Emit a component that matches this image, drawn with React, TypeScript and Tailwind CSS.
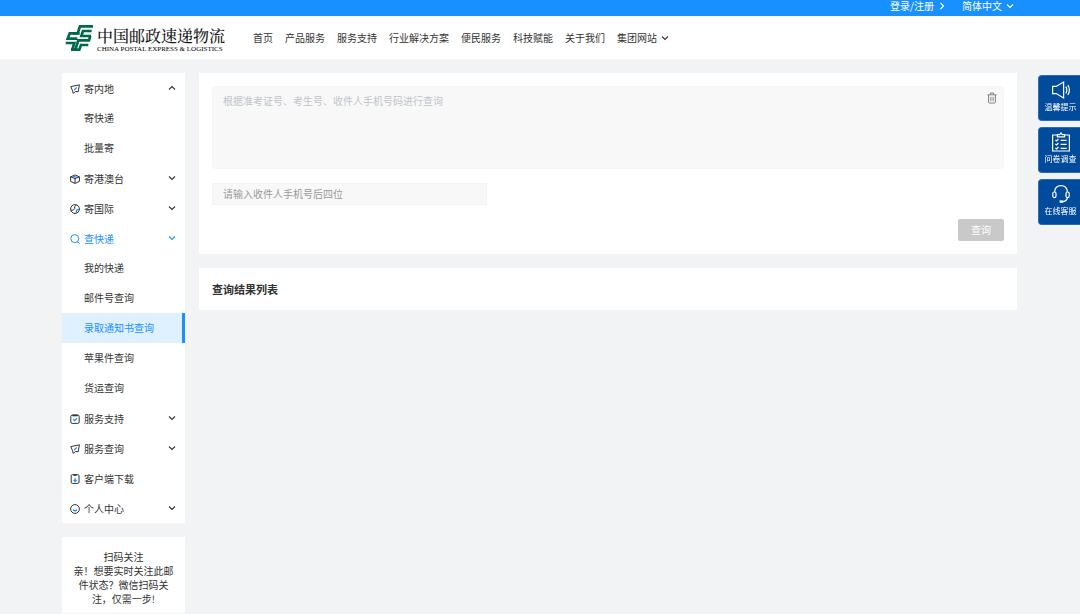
import { useState, type ReactNode } from "react";
import clsx from "clsx";

type Group = {
  label: string;
  icon: ReactNode;
  children?: string[];
  leaf?: boolean;
};

const plane = (
  <>
    <path d="M.8 2.6 9.4 .8 8.2 7.8 5.6 7.4 3.2 9.4 2.6 6.8Z" />
    <path d="M4.2 6 6.8 3.4" stroke="#1890ff" strokeWidth="1.3" />
  </>
);

const groups: Group[] = [
  { label: "寄内地", icon: plane, children: ["寄快递", "批量寄"] },
  {
    label: "寄港澳台",
    icon: (
      <>
        <path d="M.6 2.8 5 1l4.4 1.8v4.6L5 9.4.6 7.4Z" />
        <path d="M.6 2.8 5 4.6l4.4-1.8M5 4.6v4.8" />
        <path d="M3 2.4 7 3.4" stroke="#1890ff" strokeWidth="1.3" />
      </>
    ),
  },
  {
    label: "寄国际",
    icon: (
      <>
        <circle cx="5" cy="5" r="4.4" />
        <path d="M.8 6 3.2 6.2 5 4.2 4.4 2.8 6.4 1" />
        <path d="M9 5.4 6.8 6 6 8.8" stroke="#1890ff" strokeWidth="1.3" />
      </>
    ),
  },
  {
    label: "查快递",
    icon: (
      <>
        <circle cx="4.8" cy="4.6" r="4" />
        <path d="M7 7.6 9.6 9.4" />
      </>
    ),
    children: [
      "我的快递",
      "邮件号查询",
      "录取通知书查询",
      "苹果件查询",
      "货运查询",
    ],
  },
  {
    label: "服务支持",
    icon: (
      <>
        <rect x=".8" y="1.2" width="8.4" height="8.2" rx="1.4" />
        <path d="M2.4 1.4h5.2" strokeWidth="1.8" />
        <path
          d="M3.2 5.2 4.6 6.6 7 4.2"
          stroke="#1890ff"
          strokeWidth="1.3"
        />
      </>
    ),
  },
  { label: "服务查询", icon: plane },
  {
    label: "客户端下载",
    icon: (
      <>
        <rect x="1.2" y=".6" width="7.8" height="8.8" rx="1.2" />
        <path d="M3.4 1.4h3.2" />
        <path
          d="M5.1 4.2v3.2M3.6 6 5.1 7.4 6.6 6"
          stroke="#1890ff"
          strokeWidth="1.3"
        />
      </>
    ),
    leaf: true,
  },
  {
    label: "个人中心",
    icon: (
      <>
        <circle cx="5" cy="5" r="4.4" />
        <path d="M3 5.8Q5 7.8 7 5.8" stroke="#1890ff" strokeWidth="1.3" />
      </>
    ),
  },
];

const navItems = [
  "首页",
  "产品服务",
  "服务支持",
  "行业解决方案",
  "便民服务",
  "科技赋能",
  "关于我们",
];

const tools = [
  {
    label: "温馨提示",
    icon: (
      <>
        <path d="M1.6 6.4h3.6L12.6 2v16l-7.4-4.4H1.6Z" />
        <path d="M14.8 6.6q2 3.4 0 6.8M16.8 5q3.2 5 0 10" />
      </>
    ),
  },
  {
    label: "问卷调查",
    icon: (
      <>
        <path d="M6.4 3H1.6v16h16.8V3h-4.8" />
        <path d="M6.4 4.8V2.6H8.6L10 1l1.4 1.6h2.2v2.2Z" />
        <path d="M4.4 8 5.6 9 7.4 7M4.4 12l1.2 1 1.8-2M4.4 16l1.2 1 1.8-2M9.6 8.4h6M9.6 12.4h6M9.6 16.4h6" />
      </>
    ),
  },
  {
    label: "在线客服",
    icon: (
      <>
        <path d="M3.6 8Q4 1.6 10 1.6T16.4 8" />
        <rect x="1.8" y="8" width="3.2" height="5.6" rx="1.6" />
        <rect x="15" y="8" width="3.2" height="5.6" rx="1.6" />
        <path d="M16.4 13.6Q16 17 12 17.6" />
        <path d="M8.6 17.6h3.6" strokeWidth="2.4" />
      </>
    ),
  },
];

function Chevron({ className }: { className?: string }) {
  return (
    <svg
      viewBox="0 0 8 8"
      className={clsx("size-2 shrink-0", className)}
      fill="none"
      stroke="currentColor"
      strokeWidth="1.1"
    >
      <path d="M1 2.5 4 5.5 7 2.5" />
    </svg>
  );
}

function Logo() {
  return (
    <a href="#" className="flex items-center gap-1">
      <svg
        viewBox="0 0 84 78"
        className="h-[26px] w-7"
        fill="none"
        stroke="#006a48"
        strokeWidth="8"
      >
        <path d="M84 4H45L38 25H24M80 18H54L49 33H78" />
        <path d="M44 25H14L8 41H37M76 33 72 46H40L31 74H18" />
        <path d="M2 54H28L22 74M70 60H48L43 74H24" />
      </svg>
      <span className="flex flex-col pt-1">
        <span className="font-[Noto_Serif_CJK_SC,Noto_Sans_CJK_SC,serif] text-[16px]/[18px] font-medium text-neutral-900">
          中国邮政速递物流
        </span>
        <span className="font-[Liberation_Serif,serif] text-[7px]/[8px] whitespace-nowrap text-black">
          CHINA POSTAL EXPRESS &amp; LOGISTICS
        </span>
      </span>
    </a>
  );
}

function SideMenu() {
  const [open, setOpen] = useState(["寄内地", "查快递"]);
  const [selected, setSelected] = useState("录取通知书查询");

  function toggle(label: string) {
    setOpen((prev) =>
      prev.includes(label) ? prev.filter((l) => l !== label) : [...prev, label],
    );
  }

  return (
    <nav className="bg-white">
      {groups.map((group) => {
        const active = group.children?.includes(selected);
        const expanded = open.includes(group.label);
        return (
          <div key={group.label}>
            <button
              type="button"
              aria-expanded={group.leaf ? undefined : expanded}
              onClick={() => toggle(group.label)}
              className={clsx(
                "flex h-[30px] w-full items-center pr-[9px] pl-2",
                active && "text-[#1890ff]",
              )}
            >
              <span className="flex items-center gap-1 pt-0.5">
                <svg
                  viewBox="0 0 10 10"
                  className="size-2.5"
                  fill="none"
                  stroke="currentColor"
                >
                  {group.icon}
                </svg>
                {group.label}
              </span>
              {!group.leaf && (
                <Chevron
                  className={clsx(
                    "ml-auto",
                    expanded && !active && "rotate-180",
                  )}
                />
              )}
            </button>
            {expanded &&
              group.children?.map((item) => (
                <a
                  key={item}
                  href="#"
                  onClick={() => setSelected(item)}
                  className={clsx(
                    "flex h-[30px] items-center border-r-3 pl-[22px]",
                    item === selected
                      ? "border-[#1890ff] bg-[#dff0ff] text-[#1890ff]"
                      : "border-transparent",
                  )}
                >
                  {item}
                </a>
              ))}
          </div>
        );
      })}
    </nav>
  );
}

function SearchCard() {
  const [numbers, setNumbers] = useState("");
  const [phone, setPhone] = useState("");

  return (
    <form
      onSubmit={(event) => event.preventDefault()}
      className="flex flex-col gap-3.5 bg-white p-[13px]"
    >
      <div className="flex h-[83px] items-start rounded-sm border border-[#f5f5f5] bg-[#f8f8f8]">
        <textarea
          aria-label="根据准考证号、考生号、收件人手机号码进行查询"
          placeholder="根据准考证号、考生号、收件人手机号码进行查询"
          value={numbers}
          onChange={(event) => setNumbers(event.target.value)}
          className="h-full grow resize-none px-2.5 py-[7px] outline-none placeholder:text-[#c0c4cc]"
        />
        <button
          type="button"
          aria-label="清空"
          onClick={() => setNumbers("")}
          className="px-1.5 py-[5px] text-[#808080]"
        >
          <svg
            viewBox="0 0 10 12"
            className="h-3 w-2.5"
            fill="none"
            stroke="currentColor"
          >
            <path d="M.5 2.8h9M3.4 2.6V1h3.2v1.6M1.6 3v7.2q0 .8.8.8h5.2q.8 0 .8-.8V3M3.9 4.8v4.4M6.1 4.8v4.4" />
          </svg>
        </button>
      </div>
      <input
        type="text"
        aria-label="请输入收件人手机号后四位"
        placeholder="请输入收件人手机号后四位"
        value={phone}
        onChange={(event) => setPhone(event.target.value)}
        className="h-[22px] w-[275px] border border-[#f3f3f3] bg-[#f8f8f8] px-2.5 pb-0.5 outline-none placeholder:text-[#999]"
      />
      <button
        type="submit"
        className="h-[22px] w-[46px] self-end rounded-xs bg-[#c9c9c9] text-white"
      >
        查询
      </button>
    </form>
  );
}

export default function App() {
  return (
    <div className="min-h-screen bg-[#f1f3f5] font-[Noto_Sans_CJK_SC,sans-serif] text-[10px]/[14px] text-[#333]">
      <div className="flex h-4 items-start justify-end gap-4 bg-[#1890ff] pr-[66px] text-[10px]/[12px] text-white">
        <a href="#" className="flex items-center gap-1">
          登录/注册
          <Chevron className="-rotate-90" />
        </a>
        <div className="flex items-center gap-1">
          <select aria-label="语言" className="appearance-none outline-none">
            <option>简体中文</option>
          </select>
          <Chevron />
        </div>
      </div>

      <header className="flex h-11 items-center gap-7 border-b border-[#f5f5f5] bg-white px-[65px]">
        <Logo />
        <nav className="flex items-center gap-3 whitespace-nowrap">
          {navItems.map((item) => (
            <a key={item} href="#">
              {item}
            </a>
          ))}
          <button type="button" className="flex items-center gap-1">
            集团网站
            <Chevron />
          </button>
        </nav>
      </header>

      <div className="flex items-start gap-3.5 pt-[13px] pr-[63px] pl-[62px]">
        <aside className="flex w-[123px] shrink-0 flex-col gap-3.5">
          <SideMenu />
          <div className="bg-white px-2.5 pt-[13px] pb-[7px] text-center">
            <h3>扫码关注</h3>
            <p>亲！想要实时关注此邮件状态？微信扫码关注，仅需一步!</p>
          </div>
        </aside>
        <main className="flex min-w-0 grow flex-col gap-3.5">
          <SearchCard />
          <section className="bg-white px-[13px] py-3.5">
            <h2 className="text-[11px]/[14px] font-bold">查询结果列表</h2>
          </section>
        </main>
      </div>

      <div className="fixed top-[75px] right-0 flex flex-col gap-1.5">
        {tools.map((tool) => (
          <button
            key={tool.label}
            type="button"
            className="flex h-[46px] w-[42px] flex-col items-center rounded-l-sm border border-r-0 border-[#2c6cb0] bg-[#004b9c] pt-1 pl-0.5 text-[8px]/[14px] text-white"
          >
            <svg
              viewBox="0 0 20 20"
              className="size-5"
              fill="none"
              stroke="currentColor"
              strokeWidth="1.2"
            >
              {tool.icon}
            </svg>
            {tool.label}
          </button>
        ))}
      </div>
    </div>
  );
}
